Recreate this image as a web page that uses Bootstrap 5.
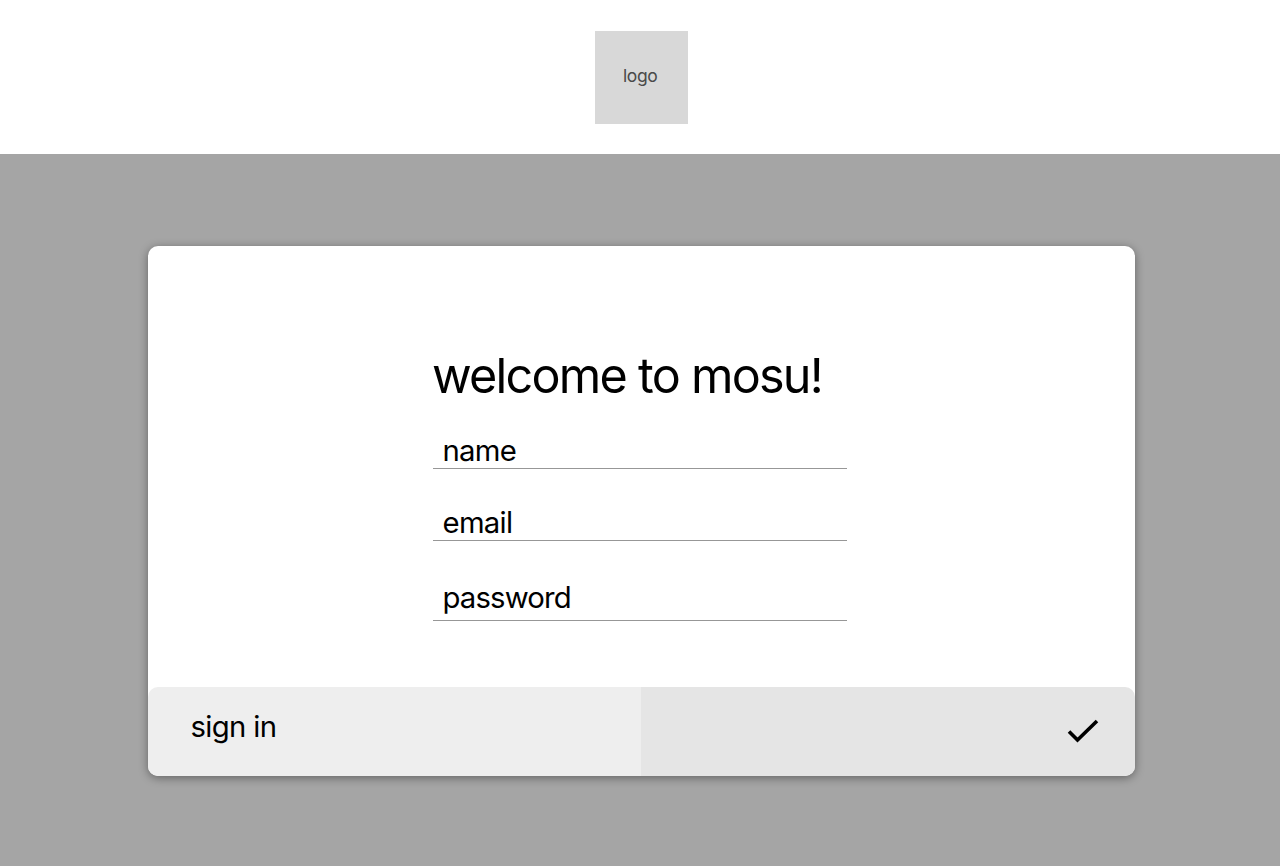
<!DOCTYPE html>
<html lang="en">
<head>
<meta charset="utf-8">
<meta name="viewport" content="width=device-width, initial-scale=1">
<title>mosu</title>
<link href="https://cdn.jsdelivr.net/npm/bootstrap@5.3.0/dist/css/bootstrap.min.css" rel="stylesheet">
<style>
body{font-family:Inter,"Liberation Sans",sans-serif;background:#a5a5a5;color:#000;height:866px;overflow:hidden}
.top-bar{height:154px;padding:31px 0 0 2px}
.logo-box{width:93px;height:93px;background:#d8d8d8;color:#4a4a4a;font-size:17.5px;letter-spacing:-.4px;line-height:20px;padding:35px 0 0 28.5px}
.welcome{width:987px;height:530px;margin:92px 0 0 148px;border-radius:10px;box-shadow:0 2px 10px rgba(0,0,0,.4)}
.fields{width:414px;margin:100px 0 0 285px}
.headline{font-size:48.5px;line-height:60px;letter-spacing:-1.75px;margin:0 0 0 -1px;height:82px;white-space:nowrap;font-weight:400}
.field{border-bottom:1px solid #979797;padding-left:9.5px;font-size:29.3px;line-height:36px;letter-spacing:-.7px}
.f-name{height:41px;padding-top:5px}
.f-email{height:72px;padding-top:36px}
.f-pass{height:80px;padding-top:39px;letter-spacing:-.85px}
.actions{height:89px;border-radius:10px;font-size:29.3px;line-height:36px;letter-spacing:-.65px}
.sign{width:493px;background:#eee;padding:22px 0 0 42.5px}
.confirm{background:#e5e5e5;padding:32px 36px 0 0}
</style>
</head>
<body>
<header class="top-bar bg-white d-flex justify-content-center align-items-start">
<div class="logo-box"><span>logo</span></div>
</header>
<main class="welcome bg-white d-flex flex-column">
<form class="fields">
<h1 class="headline"><span>welcome to mosu!</span></h1>
<div class="field f-name"><span>name</span></div>
<div class="field f-email"><span>email</span></div>
<div class="field f-pass"><span>password</span></div>
</form>
<div class="actions d-flex overflow-hidden mt-auto">
<div class="sign"><span>sign in</span></div>
<div class="confirm flex-fill d-flex justify-content-end align-items-start">
<svg width="32" height="25" viewBox="0 0 32 25" fill="none" stroke="#000" stroke-width="3.6"><path d="M2 12.5 10.5 21 30 2"/></svg>
</div>
</div>
</main>
<script src="https://cdn.jsdelivr.net/npm/bootstrap@5.3.0/dist/js/bootstrap.bundle.min.js"></script>
</body>
</html>
